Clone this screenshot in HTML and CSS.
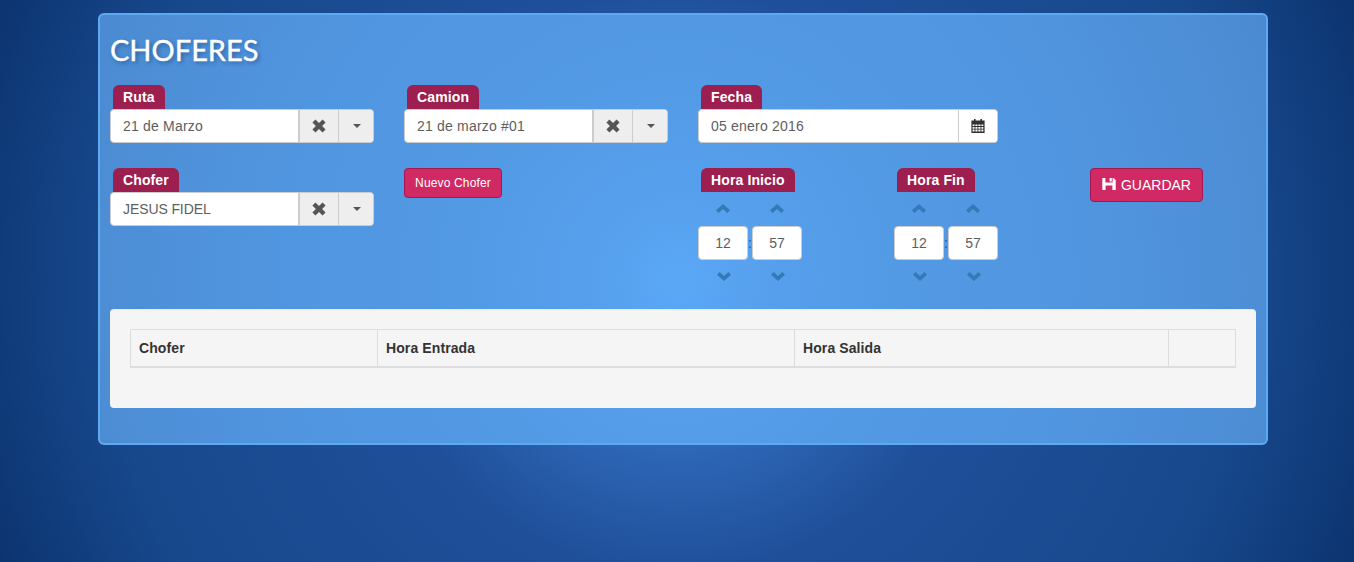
FILE: index.html
```html
<!DOCTYPE html>
<html lang="es">
<head>
<meta charset="utf-8">
<title>Choferes</title>
<link rel="stylesheet" href="styles.css">
</head>
<body>
<svg class="defs" width="0" height="0" aria-hidden="true">
  <symbol id="i-x" viewBox="0 0 13 13"><path d="M3.2 0.4 6.5 3.6 9.8 0.4 12.6 3.2 9.4 6.5 12.6 9.8 9.8 12.6 6.5 9.4 3.2 12.6 0.4 9.8 3.6 6.5 0.4 3.2Z"/></symbol>
  <symbol id="i-up" viewBox="0 0 14 9"><path d="M7 0 14 6.2 11.4 9 7 5 2.6 9 0 6.2Z"/></symbol>
  <symbol id="i-down" viewBox="0 0 14 9"><path d="M7 9 14 2.8 11.4 0 7 4 2.6 0 0 2.8Z"/></symbol>
  <symbol id="i-cal" viewBox="0 0 14 14"><path fill-rule="evenodd" d="M3 0h1.6v1.6h4.8V0H11v1.6h2.6V14H.4V1.6H3ZM1.6 5.4v1.7h1.9V5.4Zm2.8 0v1.7h2.1V5.4Zm3 0v1.7h2.1V5.4Zm3 0v1.7h1.9V5.4ZM1.6 8v1.7h1.9V8Zm2.8 0v1.7h2.1V8Zm3 0v1.7h2.1V8Zm3 0v1.7h1.9V8ZM1.6 10.6v1.9h1.9v-1.9Zm2.8 0v1.9h2.1v-1.9Zm3 0v1.9h2.1v-1.9Zm3 0v1.9h1.9v-1.9Z"/></symbol>
  <symbol id="i-save" viewBox="0 0 14 12"><path fill-rule="evenodd" d="M0.3 0H3.4V4.6H10.6V0H11.6L13.7 2.1V12H.3ZM3.6 7.4V12H10.4V7.4ZM7.6 0H9.8V3.6H7.6Z"/></symbol>
</svg>
<main class="panel">
  <h1 class="title">CHOFERES</h1>
  <div class="form-grid">
    <div class="field">
      <span class="tag">Ruta</span>
      <div class="combo">
        <span class="combo-value">21 de Marzo</span>
        <span class="combo-btn btn-clear"><svg class="ic-x"><use href="#i-x"/></svg></span>
        <span class="combo-btn btn-caret"><i class="caret"></i></span>
      </div>
    </div>
    <div class="field">
      <span class="tag">Camion</span>
      <div class="combo">
        <span class="combo-value">21 de marzo #01</span>
        <span class="combo-btn btn-clear"><svg class="ic-x"><use href="#i-x"/></svg></span>
        <span class="combo-btn btn-caret"><i class="caret"></i></span>
      </div>
    </div>
    <div class="field">
      <span class="tag">Fecha</span>
      <div class="combo">
        <span class="combo-value">05 enero 2016</span>
        <span class="combo-btn btn-cal"><svg class="ic-cal"><use href="#i-cal"/></svg></span>
      </div>
    </div>
    <div></div>

    <div class="field">
      <span class="tag">Chofer</span>
      <div class="combo">
        <span class="combo-value caps">JESUS FIDEL</span>
        <span class="combo-btn btn-clear"><svg class="ic-x"><use href="#i-x"/></svg></span>
        <span class="combo-btn btn-caret"><i class="caret"></i></span>
      </div>
    </div>
    <div><button class="btn btn-sm" type="button">Nuevo Chofer</button></div>
    <div class="times">
      <div class="field">
        <span class="tag">Hora Inicio</span>
        <div class="timepicker">
          <svg class="ic-chev chev-up"><use href="#i-up"/></svg><span></span><svg class="ic-chev chev-up"><use href="#i-up"/></svg>
          <span class="time-box">12</span><span class="colon">:</span><span class="time-box">57</span>
          <svg class="ic-chev chev-down"><use href="#i-down"/></svg><span></span><svg class="ic-chev chev-down"><use href="#i-down"/></svg>
        </div>
      </div>
      <div class="field">
        <span class="tag">Hora Fin</span>
        <div class="timepicker">
          <svg class="ic-chev chev-up"><use href="#i-up"/></svg><span></span><svg class="ic-chev chev-up"><use href="#i-up"/></svg>
          <span class="time-box">12</span><span class="colon">:</span><span class="time-box">57</span>
          <svg class="ic-chev chev-down"><use href="#i-down"/></svg><span></span><svg class="ic-chev chev-down"><use href="#i-down"/></svg>
        </div>
      </div>
    </div>
    <div><button class="btn btn-save" type="button"><svg class="ic-save"><use href="#i-save"/></svg> GUARDAR</button></div>
  </div>
  <section class="well">
    <table class="table">
      <thead>
        <tr><th class="c1">Chofer</th><th class="c2">Hora Entrada</th><th class="c3">Hora Salida</th><th></th></tr>
      </thead>
    </table>
  </section>
</main>
</body>
</html>
```
FILE: styles.css
```css
* { box-sizing: border-box; }
html, body { height: 100%; }
body {
  margin: 0;
  padding: 13px 86px 0 98px;
  font-family: "Liberation Sans", Arial, sans-serif;
  font-size: 14px;
  color: #5e5e5e;
  background: radial-gradient(circle at 677px 281px, #3a7cd2 0, #2e67b7 23%, #1f4f99 40%, #17488c 78%, #0c3470 100%);
  overflow: hidden;
}
.defs { position: absolute; }
.panel {
  width: 1170px;
  height: 432px;
  padding: 0 10px;
  border: 2px solid #5ea9f2;
  border-radius: 6px;
  background: radial-gradient(circle at 579px 266px, #5aa8f6 0, #569fec 15%, #5298e2 42%, #5094de 70%, #4b8ad0 100%);
}
.title {
  margin: 0;
  height: 70px;
  padding-top: 17px;
  font-family: "Lato", sans-serif;
  font-size: 29px;
  line-height: 36px;
  font-weight: 400;
  color: #fff;
  -webkit-text-stroke: 0.4px #fff;
  text-shadow: 2px 2px 4px #2a5f9f;
}
.form-grid {
  display: grid;
  grid-template-columns: 264px 264px 300px 1fr;
  grid-auto-rows: min-content;
  column-gap: 30px;
  row-gap: 25px;
}
.field { display: flex; flex-direction: column; align-items: flex-start; }
.tag {
  margin-left: 3px;
  height: 24px;
  padding: 0 10px;
  border-radius: 6px 6px 0 0;
  background: #9c1f4f;
  color: #fff;
  font-weight: 700;
  font-size: 14px;
  line-height: 24px;
  letter-spacing: 0.12px;
}
.combo {
  display: flex;
  width: 100%;
  height: 34px;
  border: 1px solid #ccc;
  border-radius: 4px;
  background: #fff;
  overflow: hidden;
}
.combo-value { flex: 1; padding: 0 12px; line-height: 32px; letter-spacing: 0.2px; }
.caps { letter-spacing: -0.1px; }
.combo-btn { display: flex; align-items: center; justify-content: center; border-left: 1px solid #ccc; background: #eee; }
.btn-clear { width: 40px; border-left-width: 2px; }
.btn-caret { width: 35px; padding-left: 1px; }
.btn-cal { width: 39px; background: #fff; }
.caret { width: 0; height: 0; border: 4px solid transparent; border-top-color: #555; border-bottom: 0; }
.ic-x { width: 14px; height: 14px; fill: #555; }
.ic-cal { width: 14px; height: 14px; fill: #333; }
.btn {
  border: 1px solid #a3164f;
  border-radius: 4px;
  background: #d02963;
  color: #fff;
  font-family: inherit;
}
.btn-sm { width: 98px; height: 30px; padding: 0; font-size: 12px; letter-spacing: 0.15px; }
.btn-save { width: 113px; height: 34px; margin-left: 62px; padding: 0; font-size: 14px; }
.ic-save { width: 14px; height: 12px; margin-right: 1px; fill: #fff; vertical-align: 0; }
.times { display: flex; justify-content: space-between; }
.timepicker {
  display: grid;
  grid-template-columns: 50px 4px 50px;
  grid-template-rows: 34px 34px 34px;
  justify-items: center;
  align-items: center;
}
.ic-chev { width: 14px; height: 9px; fill: #337ab7; }
.chev-up { margin-bottom: 2px; }
.chev-down { margin: 0 0 2px 2px; }
.time-box {
  width: 50px;
  height: 34px;
  border: 1px solid #ccc;
  border-radius: 4px;
  background: #fff;
  text-align: center;
  line-height: 32px;
}
.colon { color: #2a5a8a; line-height: 34px; }
.well {
  height: 99px;
  margin-top: 15px;
  padding: 20px;
  border-radius: 4px;
  background: #f5f5f5;
  box-shadow: inset 0 1px 1px rgba(0,0,0,.05);
}
.table { width: 1106px; border-collapse: collapse; table-layout: fixed; }
.table th {
  height: 37px;
  padding: 8px;
  border: 1px solid #ddd;
  border-bottom-width: 2px;
  color: #333;
  font-size: 14px;
  font-weight: 700;
  text-align: left;
  letter-spacing: 0.1px;
}
.c1 { width: 247px; }
.c2 { width: 417px; }
.c3 { width: 374px; }
```
